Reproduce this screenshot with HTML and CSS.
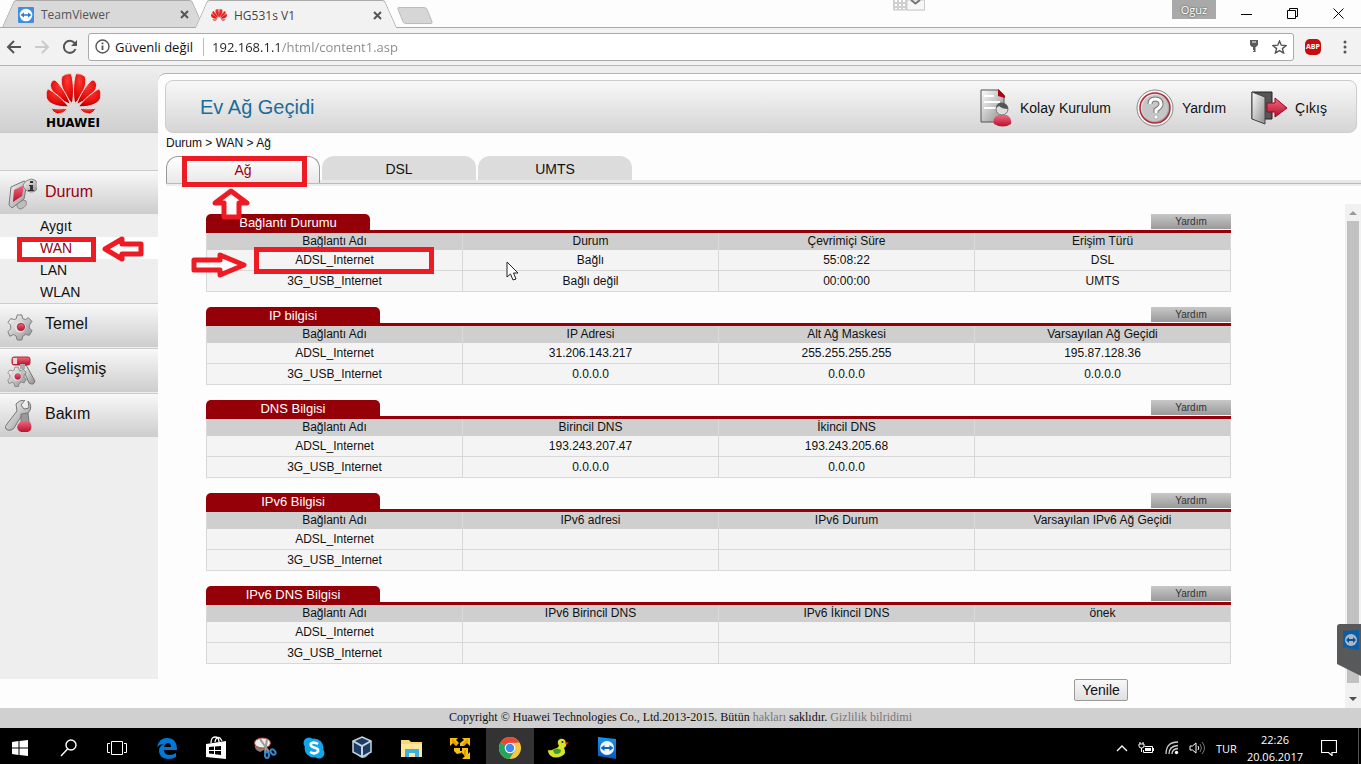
FILE: index.html
```
<!DOCTYPE html>
<html lang="tr">
<head>
    <meta charset="UTF-8">
    <meta name="viewport" content="width=device-width, initial-scale=1.0">
    <title>HG531s V1</title>
    <link rel="stylesheet" href="styles.css">
</head>
<body>
    <svg class="defs" aria-hidden="true">
        <defs>
            <radialGradient id="petal" cx="50%" cy="25%" r="80%"><stop offset="0" stop-color="#fb3a30"/><stop offset="0.6" stop-color="#e60d0d"/><stop offset="1" stop-color="#b00000"/></radialGradient>
            <linearGradient id="metal" x1="0" y1="0" x2="1" y2="1"><stop offset="0" stop-color="#fdfdfd"/><stop offset="1" stop-color="#8d8d8d"/></linearGradient>
            <linearGradient id="red" x1="0" y1="0" x2="0" y2="1"><stop offset="0" stop-color="#ee6b80"/><stop offset="1" stop-color="#b90d2b"/></linearGradient>
            <linearGradient id="blue" x1="0" y1="0" x2="0" y2="1"><stop offset="0" stop-color="#1b93ee"/><stop offset="1" stop-color="#0a56b8"/></linearGradient>
            <g id="petals">
                <path d="M79 91C60 74 38 34 48 9Q58-1 76 1C84 30 84 65 79 91Z"/>
                <path d="M73 93C54 86 14 62 13 36Q15 20 27 20C42 32 65 66 73 93Z"/>
                <path d="M68 100C50 102 10 98 1 74Q-2 55 5 46C24 55 52 79 68 100Z"/>
                <path d="M65 106C50 105 30 108 14 104Q22 120 34 122Q52 123 65 106Z"/>
            </g>
        </defs>
        <symbol id="huawei" viewBox="0 0 165 124">
            <g fill="url(#petal)" stroke="#e4e4e4" stroke-width="3"><use href="#petals"/><use href="#petals" transform="matrix(-1 0 0 1 165 0)"/></g>
        </symbol>
        <symbol id="teamviewer" viewBox="0 0 16 16">
            <rect width="16" height="16" rx="1" fill="#3d8ee0"/><circle cx="8" cy="8" r="6.3" fill="#fff"/>
            <path d="M2.6 8L6 5.4V7.2H10V5.4L13.4 8L10 10.6V8.8H6V10.6Z" fill="#2a7bd0"/>
        </symbol>
        <symbol id="gear" viewBox="0 0 28 28">
            <path d="M11 1H16L17 5L20 6L23 4L27 8L24 12V15L27 18L24 23L20 22L17 24L16 28H11L10 24L7 22L3 24L1 19L4 16V12L1 9L4 5L8 6L10 5Z" fill="url(#metal)" stroke="#777" stroke-width="1"/>
            <circle cx="14" cy="14" r="6" fill="#e2e2e2"/><circle cx="15" cy="14" r="4" fill="url(#red)" stroke="#a8324a"/>
        </symbol>
    </svg>

    <div class="tab-strip">
        <div class="tab">
            <svg class="favicon"><use href="#teamviewer"/></svg>
            <span class="tab-title">TeamViewer</span>
            <button class="tab-close" aria-label="Kapat"><svg viewBox="0 0 9 9"><path d="M1 1L8 8M8 1L1 8"/></svg></button>
        </div>
        <div class="tab active">
            <svg class="favicon"><use href="#huawei"/></svg>
            <span class="tab-title">HG531s V1</span>
            <button class="tab-close" aria-label="Kapat"><svg viewBox="0 0 9 9"><path d="M1 1L8 8M8 1L1 8"/></svg></button>
        </div>
        <button class="new-tab" aria-label="Yeni sekme"></button>
        <div class="remote-handle">
            <svg width="32" height="11" viewBox="0 0 32 11"><path d="M0 0H32V10.500H0Z" fill="#d0d0d0"/><path d="M14 0H31.500V10H14Z" fill="#f7f7f7" stroke="#ccc"/><path d="M2 0H4V2H2ZM6 0H8V2H6ZM10 0H12V2H10ZM2 4H4V6H2ZM6 4H8V6H6ZM10 4H12V6H10ZM2 8H4V9H2ZM6 8H8V9H6ZM10 8H12V9H10Z" fill="#fff"/><path d="M18 0L22.500 3.500L27 0" fill="none" stroke="#777" stroke-width="2"/></svg>
        </div>
        <div class="window-buttons">
            <button class="user">Oguz</button>
            <button aria-label="Simge durumuna küçült"><svg viewBox="0 0 11 11"><path d="M0 6.500H11"/></svg></button>
            <button aria-label="Önceki boyut"><svg viewBox="0 0 11 11"><path d="M0.500 2.500H8.500V10.500H0.500ZM2.500 2.500V0.500H10.500V8.500H8.500"/></svg></button>
            <button aria-label="Kapat"><svg viewBox="0 0 11 11"><path d="M0.500 0.500L10.500 10.500M10.500 0.500L0.500 10.500"/></svg></button>
        </div>
    </div>

    <div class="toolbar">
        <div class="nav-buttons">
            <button aria-label="Geri"><svg viewBox="0 0 16 16"><path d="M15 8H2M8 2L2 8L8 14"/></svg></button>
            <button aria-label="İleri" class="off"><svg viewBox="0 0 16 16"><path d="M1 8H14M8 2L14 8L8 14"/></svg></button>
            <button aria-label="Yenile"><svg viewBox="0 0 16 16"><path d="M13.500 10A6 6 0 1 1 12.500 4"/><path d="M15 1V7H9Z" fill="#555" stroke="none"/></svg></button>
        </div>
        <div class="address">
            <svg width="15" height="15" viewBox="0 0 15 15" fill="none" stroke="#555" stroke-width="1.400"><circle cx="7.500" cy="7.500" r="6.500"/><path d="M7.500 6.500V11M7.500 3.500V5.200" stroke-width="1.800"/></svg>
            <label for="url">Güvenli değil</label>
            <input id="url" type="text" value="192.168.1.1/html/content1.asp">
            <svg width="10" height="13" viewBox="0 0 10 13"><path d="M1 0H9V5L7 7H6.500V12H4V11H5V10H4V7H3L1 5Z" fill="#5a5a5a"/><path d="M3 2H7" stroke="#fff"/></svg>
            <svg width="15" height="14" viewBox="0 0 15 14"><path d="M7.500 1L9.300 5.200L14 5.600L10.400 8.600L11.600 13L7.500 10.600L3.400 13L4.600 8.600L1 5.600L5.700 5.200Z" fill="none" stroke="#555" stroke-width="1.400"/></svg>
        </div>
        <button class="abp">ABP</button>
        <button class="more" aria-label="Menü"><svg viewBox="0 0 4 14"><circle cx="2" cy="2" r="1.500"/><circle cx="2" cy="7" r="1.500"/><circle cx="2" cy="12" r="1.500"/></svg></button>
    </div>

    <div class="page">
        <aside class="sidebar">
            <div class="logo">
                <svg><use href="#huawei"/></svg>
                <span>HUAWEI</span>
            </div>
            <nav>
                <a class="menu current" href="#">
                    <svg viewBox="0 0 32 32"><path d="M12 25Q15 20 21 23Q23 28 16 31Q11 31 12 25Z" fill="#bdbdbd" stroke="#888"/><path d="M6 9L19 3L22 5L19 21L7 30L4 27Z" fill="url(#metal)" stroke="#777"/><path d="M9 12L19 7L17 18L8 24Z" fill="url(#red)"/><path d="M18 7Q20 2 26 1Q33 2 33 8Q32 14 26 14Q19 13 18 7Z" fill="url(#metal)" stroke="#888"/><path d="M25 3H28V5H25ZM24 7H28V12H29V13H23V12H25V8H24Z" fill="#333"/></svg>
                    Durum
                </a>
                <ul class="submenu">
                    <li><a href="#">Aygıt</a></li>
                    <li class="selected"><a href="#">WAN</a>
                        <span class="mark mark-wan"></span>
                        <svg class="arrow arrow-wan" viewBox="0 0 42 28"><path d="M3 14L20 4V9H39V19H20V24Z"/></svg>
                    </li>
                    <li><a href="#">LAN</a></li>
                    <li><a href="#">WLAN</a></li>
                </ul>
                <a class="menu" href="#">
                    <svg viewBox="0 0 32 32"><use href="#gear" x="2" y="3" width="26" height="28"/></svg>
                    Temel
                </a>
                <a class="menu" href="#">
                    <svg viewBox="0 0 32 32"><path d="M21 10L30 26Q29 31 24 28L17 12Z" fill="url(#metal)" stroke="#777"/><rect x="7" y="2" width="18" height="8" rx="2" fill="url(#red)" stroke="#a33"/><rect x="8" y="3" width="4" height="6" fill="#f2d5da"/><path d="M15 9H20V14H15Z" fill="#aaa"/><use href="#gear" x="2" y="11" width="20" height="21"/></svg>
                    Gelişmiş
                </a>
                <a class="menu" href="#">
                    <svg viewBox="0 0 32 32"><path d="M11 4Q14 0 20 0L16 5L19 9L24 8L23 1Q28 6 24 12Q21 15 17 15L9 28Q5 32 1 29Q-1 27 2 24L12 11Z" fill="url(#metal)" stroke="#777"/><path d="M16 14L23 13L24 22H16Z" fill="#999" stroke="#777"/><path d="M15 22Q20 19 25 22Q28 27 25 31Q19 34 14 31Q10 27 15 22Z" fill="url(#red)"/></svg>
                    Bakım
                </a>
            </nav>
        </aside>

        <main>
            <header class="banner">
                <h1>Ev Ağ Geçidi</h1>
                <a href="#">
                    <svg width="32" height="38" viewBox="0 0 32 38"><path d="M1 1H19L24 6V33H1Z" fill="url(#metal)" stroke="#555"/><path d="M18 0L25 7V9L18 7Z" fill="#b00012"/><path d="M4 7H14M4 13H20M4 19H17" stroke="#fff" stroke-width="2"/><path d="M14 35Q12 29 18 26H27Q32 29 31 35Q23 40 14 35Z" fill="url(#red)"/><circle cx="22" cy="20" r="6" fill="#ddd" stroke="#777"/><path d="M16 19Q17 13 23 14Q28 15 28 20Q22 20 19 17Z" fill="#555"/></svg>
                    Kolay Kurulum
                </a>
                <a href="#">
                    <svg width="38" height="38" viewBox="0 0 38 38"><circle cx="19" cy="19" r="18" fill="#f7f7f7" stroke="#888"/><circle cx="19" cy="19" r="15" fill="url(#metal)" stroke="#b02a3b" stroke-width="1.500"/><circle cx="19" cy="19" r="13" fill="#c6c6c6"/><path d="M14 15Q14 10 19 10Q25 10 25 15Q25 18 20 21V24" fill="none" stroke="#777" stroke-width="5"/><path d="M14 15Q14 10 19 10Q25 10 25 15Q25 18 20 21V24" fill="none" stroke="#fff" stroke-width="3"/><circle cx="20" cy="28" r="2" fill="#fff" stroke="#888" stroke-width=".5"/></svg>
                    Yardım
                </a>
                <a href="#">
                    <svg width="36" height="34" viewBox="0 0 36 34"><path d="M1 1H21V28H1Z" fill="#555" stroke="#222"/><path d="M1 1L14 6V33L1 28Z" fill="url(#metal)" stroke="#444"/><path d="M16 12H24V7L36 17L24 26V21H16Z" fill="url(#red)" stroke="#a0001c"/></svg>
                    Çıkış
                </a>
            </header>
            <div class="breadcrumb">Durum &gt; WAN &gt; Ağ</div>
            <ul class="tabs">
                <li class="open"><a href="#">Ağ</a>
                    <span class="mark mark-tab"></span>
                    <svg class="arrow arrow-tab" viewBox="0 0 38 32"><path d="M19 3L35 15H27V29H12V15H3Z"/></svg>
                </li>
                <li><a href="#">DSL</a></li>
                <li><a href="#">UMTS</a></li>
            </ul>

            <div class="scroll-area">
                <div class="content">
                    <section>
                        <div class="section-head"><h2 class="short">Bağlantı Durumu</h2><button>Yardım</button></div>
                        <table>
                            <thead><tr><th>Bağlantı Adı</th><th>Durum</th><th>Çevrimiçi Süre</th><th>Erişim Türü</th></tr></thead>
                            <tbody>
                                <tr>
                                    <td class="marked">ADSL_Internet
                                        <span class="mark mark-row"></span>
                                        <svg class="arrow arrow-row" viewBox="0 0 56 28"><path d="M3 9H29V4L53 14L29 24V19H3Z"/></svg>
                                    </td>
                                    <td class="marked">Bağlı
                                        <svg class="cursor" viewBox="0 0 14 20"><path d="M1 1V16L4.500 13L7 19L10 18L7.500 12H12Z" fill="#fff" stroke="#222"/></svg>
                                    </td>
                                    <td>55:08:22</td><td>DSL</td>
                                </tr>
                                <tr><td>3G_USB_Internet</td><td>Bağlı değil</td><td>00:00:00</td><td>UMTS</td></tr>
                            </tbody>
                        </table>
                    </section>
                    <section>
                        <div class="section-head"><h2>IP bilgisi</h2><button>Yardım</button></div>
                        <table>
                            <thead><tr><th>Bağlantı Adı</th><th>IP Adresi</th><th>Alt Ağ Maskesi</th><th>Varsayılan Ağ Geçidi</th></tr></thead>
                            <tbody>
                                <tr><td>ADSL_Internet</td><td>31.206.143.217</td><td>255.255.255.255</td><td>195.87.128.36</td></tr>
                                <tr><td>3G_USB_Internet</td><td>0.0.0.0</td><td>0.0.0.0</td><td>0.0.0.0</td></tr>
                            </tbody>
                        </table>
                    </section>
                    <section>
                        <div class="section-head"><h2>DNS Bilgisi</h2><button>Yardım</button></div>
                        <table>
                            <thead><tr><th>Bağlantı Adı</th><th>Birincil DNS</th><th>İkincil DNS</th><th></th></tr></thead>
                            <tbody>
                                <tr><td>ADSL_Internet</td><td>193.243.207.47</td><td>193.243.205.68</td><td></td></tr>
                                <tr><td>3G_USB_Internet</td><td>0.0.0.0</td><td>0.0.0.0</td><td></td></tr>
                            </tbody>
                        </table>
                    </section>
                    <section>
                        <div class="section-head"><h2>IPv6 Bilgisi</h2><button>Yardım</button></div>
                        <table>
                            <thead><tr><th>Bağlantı Adı</th><th>IPv6 adresi</th><th>IPv6 Durum</th><th>Varsayılan IPv6 Ağ Geçidi</th></tr></thead>
                            <tbody>
                                <tr><td>ADSL_Internet</td><td></td><td></td><td></td></tr>
                                <tr><td>3G_USB_Internet</td><td></td><td></td><td></td></tr>
                            </tbody>
                        </table>
                    </section>
                    <section>
                        <div class="section-head"><h2>IPv6 DNS Bilgisi</h2><button>Yardım</button></div>
                        <table>
                            <thead><tr><th>Bağlantı Adı</th><th>IPv6 Birincil DNS</th><th>IPv6 İkincil DNS</th><th>önek</th></tr></thead>
                            <tbody>
                                <tr><td>ADSL_Internet</td><td></td><td></td><td></td></tr>
                                <tr><td>3G_USB_Internet</td><td></td><td></td><td></td></tr>
                            </tbody>
                        </table>
                    </section>
                    <div class="actions"><button class="refresh">Yenile</button></div>
                </div>
                <div class="scrollbar">
                    <svg viewBox="0 0 8 4"><path d="M0 4L4 0L8 4Z" fill="#999"/></svg>
                    <div class="thumb"></div>
                    <svg viewBox="0 0 8 4"><path d="M0 0L4 4L8 0Z" fill="#505050"/></svg>
                    <svg class="tv-tab" viewBox="0 0 24 52"><path d="M3 0H24V52L0 40V3Q0 0 3 0Z" fill="#58595b"/><path d="M6 7L22 6V26L6 23Z" fill="#0b5ea6"/><circle cx="14" cy="16" r="6" fill="#a9b8c4"/><path d="M9 16L12 13V15H16V13L19 16L16 19V17H12V19Z" fill="#0b4f91"/></svg>
                </div>
            </div>
        </main>
    </div>

    <footer>Copyright © Huawei Technologies Co., Ltd.2013-2015. Bütün <a href="#">hakları</a> saklıdır. <a href="#">Gizlilik bilridimi</a></footer>

    <div class="taskbar">
        <div class="apps">
            <button aria-label="Başlat"><svg viewBox="0 0 24 24"><path d="M4 6L10.500 5V11.500H4ZM11.500 4.900L20 4V11.500H11.500ZM4 12.500H10.500V19L4 18ZM11.500 12.500H20V20L11.500 19.100Z" fill="#fff"/></svg></button>
            <button aria-label="Ara"><svg viewBox="0 0 24 24"><g fill="none" stroke="#fff" stroke-width="1.400"><circle cx="14" cy="9" r="5"/><path d="M10.500 13L4 20"/></g></svg></button>
            <button aria-label="Görev Görünümü"><svg viewBox="0 0 24 24"><path d="M5.500 5.500H16.500V18.500H5.500ZM4 7.500H1.500V16.500H4M18 7.500H20.500V16.500H18" fill="none" stroke="#fff"/></svg></button>
            <button aria-label="Edge"><svg viewBox="0 0 24 24"><path d="M2 11Q4 2 12 2Q22 2 22 14H9Q9 19 15 19Q18 19 21 17V21Q18 23 13 23Q4 22 4 15Q4 10 9 8Q5 8 2 11ZM9 11H16Q16 7 13 7Q10 7 9 11Z" fill="#0078d7" fill-rule="evenodd"/></svg></button>
            <button aria-label="Mağaza"><svg viewBox="0 0 24 24"><path d="M2 8L22 5V23L2 21Z" fill="#fff"/><path d="M7 7Q7 1 11 1Q15 1 15 6M11 6Q12 0 16 2L18 5" fill="none" stroke="#fff" stroke-width="1.300"/><path d="M5 11L10 10.500V14H5ZM11 10.400L17 10V14H11ZM5 15H10V18L5 17.500ZM11 15H17V19L11 18.200Z" fill="#000"/></svg></button>
            <button aria-label="Ekran Alıntısı"><svg viewBox="0 0 24 24"><path d="M2 9Q1 14 7 16L13 13L10 9Z" fill="#897b76"/><ellipse cx="9.500" cy="7" rx="8" ry="5" fill="#eee" stroke="#b6403b"/><path d="M7 3L16 16M14 3L12 17" stroke="#9a9a9a" stroke-width="2"/><g fill="none" stroke="#2f8fd6" stroke-width="2"><ellipse cx="14" cy="19" rx="2" ry="3"/><ellipse cx="20" cy="16" rx="2" ry="3" transform="rotate(-40 20 16)"/></g></svg></button>
            <button aria-label="Skype"><svg viewBox="0 0 24 24"><circle cx="12" cy="12" r="9.500" fill="#12a5e8"/><circle cx="7" cy="7" r="5.500" fill="#12a5e8"/><circle cx="17" cy="17" r="5.500" fill="#12a5e8"/><path d="M16 8Q12 5.500 9 7.500Q7.500 10 12 11.500Q17 12.500 16 15.500Q13 19 8 16" fill="none" stroke="#fff" stroke-width="2.600"/></svg></button>
            <button aria-label="VirtualBox"><svg viewBox="0 0 24 24"><path d="M6 18Q12 26 18 18Z" fill="#8fa4ba"/><path d="M11 1L20 5V16L11 21L2 16V5Z" fill="#1c3b60" stroke="#c5d3e0" stroke-width="1.500"/><path d="M2 5L11 10L20 5M11 10V21" fill="none" stroke="#c5d3e0" stroke-width="2"/></svg></button>
            <button aria-label="Dosya Gezgini"><svg viewBox="0 0 24 24"><path d="M1 4H9L11 6H22V21H1Z" fill="#f8d775"/><path d="M1 8H22V21H1Z" fill="#ffe69b"/><path d="M5 13H19V21H15V17H9V21H5Z" fill="#3eb0e0"/></svg></button>
            <button aria-label="VMware"><svg viewBox="0 0 24 24"><path d="M1 2H9L7 4L10 7L7 10L4 7L1 10ZM13 2H21V10L18 7L15 10H11V7L15 4ZM5 12H11V15H14L12 17L8 18L5 15ZM13 12H19V18L21 16V23H13L16 20L13 17Z" fill="#f8c20c"/><path d="M3 4L8 9M19 4L14 9M16 14V20" stroke="#e39a00" stroke-width="2"/></svg></button>
            <button class="running" aria-label="Chrome"><svg viewBox="0 0 24 24"><circle cx="12" cy="12" r="11" fill="#f7c83f"/><path d="M12 12L2.500 6.500A11 11 0 0 1 21.500 6.500L12 7Z" fill="#e8473b"/><path d="M12 12L2.500 6.500A11 11 0 0 0 11.500 23L17 14Z" fill="#27a45b"/><circle cx="12" cy="12" r="5.300" fill="#fff"/><circle cx="12" cy="12" r="4.200" fill="#4285f4"/></svg></button>
            <button aria-label="Duck"><svg viewBox="0 0 24 24"><path d="M1 14Q4 15 7 13Q11 12 12 10Q9 5 13 3Q18 2 19 7Q20 10 17 12Q20 17 15 20Q8 23 4 20Q1 18 1 14Z" fill="#d9e32c"/><path d="M6 14Q10 11 14 14Q14 18 9 18Q7 18 6 14Z" fill="#3b9e2c"/><path d="M18 6L22 6.500L19 9Z" fill="#e22"/><circle cx="15.500" cy="6" r="1" fill="#222"/></svg></button>
            <button aria-label="TeamViewer"><svg viewBox="0 0 24 24"><path d="M2 1L20 3V23L2 20Z" fill="url(#blue)"/><circle cx="11" cy="12" r="7" fill="#eef5fb"/><path d="M4.500 12L8.500 9V11H13.500V9L17.500 12L13.500 15V13H8.500V15Z" fill="#1263bd"/></svg></button>
        </div>
        <div class="tray">
            <svg width="12" height="8" viewBox="0 0 12 8"><path d="M1 7L6 2L11 7" fill="none" stroke="#fff" stroke-width="1.300"/></svg>
            <svg width="17" height="13" viewBox="0 0 17 13"><path d="M1 2H6V4Q6 6 3.500 6Q1 6 1 4ZM2 0V2M5 0V2M3.500 6V10" fill="none" stroke="#fff"/><path d="M6.500 4.500H14.500V10.500H5.500V8" fill="none" stroke="#fff"/><path d="M7 6H13V9H7ZM15 6H16V9H15Z" fill="#fff"/></svg>
            <svg width="14" height="14" viewBox="0 0 14 14"><g fill="none" stroke="#ccc" stroke-width="1.300"><path d="M1 13Q1 1 13 1M4 13Q4 5 13 4.500M7 13Q7 8 13 7.500"/></g><circle cx="11.500" cy="11.500" r="1.700" fill="#fff"/></svg>
            <svg width="17" height="14" viewBox="0 0 17 14"><path d="M1 5H3.500L7 2V12L3.500 9H1Z" fill="none" stroke="#fff"/><path d="M9 5Q10.500 7 9 9" fill="none" stroke="#fff"/><path d="M11 3Q14 7 11 11M13 1Q18 7 13 13" fill="none" stroke="#777"/></svg>
            <span>TUR</span>
            <div class="clock">22:26<br>20.06.2017</div>
            <svg class="notice" width="16" height="16" viewBox="0 0 16 16"><path d="M.5.5H15.500V12.500H11V15.500L7.500 12.500H.5Z" fill="none" stroke="#fff" stroke-width="1.200"/></svg>
        </div>
    </div>
</body>
</html>
```
FILE: styles.css
```
* { box-sizing: border-box; }
body { margin: 0; min-height: 100vh; display: flex; flex-direction: column; background-color: #fdfdfd; font-family: "Liberation Sans", Arial, sans-serif; font-size: 12px; color: #111; }
button { margin: 0; padding: 0; border: none; background: none; font: inherit; color: inherit; }
a { color: inherit; text-decoration: none; }
ul { list-style: none; margin: 0; padding: 0; }
svg { display: block; flex: none; }
.defs { position: absolute; width: 0; height: 0; }

/* browser window */
.tab-strip { position: relative; display: flex; height: 28px; padding-left: 8px; font-family: "Open Sans", sans-serif; border-bottom: 1px solid #aaa; }
.tab { position: relative; z-index: 1; display: flex; align-items: center; gap: 7px; width: 190px; height: 27px; padding: 2px 9px 0 10px; color: #555; }
.tab::before, .tab::after { content: ""; position: absolute; z-index: -1; top: 0; bottom: 0; width: 60%; background-color: #d9d9d9; border-top: 1px solid #aaa; }
.tab::before { left: 0; transform: skewX(-24deg); border-left: 1px solid #aaa; border-top-left-radius: 3px; }
.tab::after { right: 0; transform: skewX(24deg); border-right: 1px solid #aaa; border-top-right-radius: 3px; }
.tab.active { z-index: 2; width: 190px; height: 28px; margin-left: 3px; color: #444; }
.tab.active::before, .tab.active::after { background-color: #f2f2f2; }
.favicon { width: 16px; height: 16px; }
.tab-title { flex: 1; font-size: 12px; }
.tab-close { width: 9px; height: 9px; }
.tab-close svg { width: 9px; height: 9px; stroke: #555; stroke-width: 2; }
.new-tab { width: 30px; height: 17px; margin: 7px 0 0 9px; background-color: #d6d6d6; border: 1px solid #bbb; border-radius: 3px; transform: skewX(22deg); }
.remote-handle { margin-left: auto; margin-right: 436px; }
.window-buttons { position: absolute; top: 0; right: 0; display: flex; }
.window-buttons button { display: flex; align-items: center; justify-content: center; width: 46px; height: 26px; }
.window-buttons svg { width: 11px; height: 11px; fill: none; stroke: #000; }
.window-buttons .user { width: 44px; height: 19px; margin-right: 7px; background-color: #a9a9a9; color: #fff; font-size: 11px; text-shadow: 0 0 2px #333; }
.toolbar { display: flex; align-items: center; height: 38px; padding: 0 14px 0 6px; background-color: #f2f2f2; border-bottom: 1px solid #b5b5b5; font-family: "Open Sans", sans-serif; }
.nav-buttons { display: flex; gap: 12px; width: 82px; }
.nav-buttons svg { width: 16px; height: 16px; fill: none; stroke: #555; stroke-width: 2; }
.nav-buttons .off { opacity: 0.25; }
.address { flex: 1; display: flex; align-items: center; height: 28px; padding: 0 6px; background-color: #fff; border: 1px solid #aaa; border-radius: 3px; font-size: 13px; }
.address label { margin-left: 5px; padding-right: 10px; border-right: 1px solid #bbb; }
.address input { flex: 1; border: none; outline: none; padding: 0 0 0 8px; font: inherit; background: linear-gradient(to right, #222 78px, #888 78px); background-clip: text; -webkit-background-clip: text; -webkit-text-fill-color: transparent; }
.address input + svg { margin-right: 13px; }
.abp { width: 16px; height: 16px; margin-left: 11px; background-color: #c70d0d; border-radius: 5px; color: #fff; font-size: 7px; font-weight: bold; }
.more { margin-left: 22px; }
.more svg { width: 4px; height: 14px; fill: #555; }

/* sidebar */
.page { flex: 1; display: flex; background: linear-gradient(#eee, #eee) top / 100% 20px no-repeat; }
.sidebar { width: 158px; flex: none; margin-bottom: 29px; background-color: #eee; }
.logo { display: flex; flex-direction: column; align-items: center; gap: 1px; height: 67px; padding: 7px 12px 0 0; background: linear-gradient(#efefef, #d0d0d0); border-bottom: 1px solid #c8c8c8; font: bold 12px/14px "DejaVu Sans", sans-serif; color: #000; }
.logo svg { width: 55px; height: 42px; }
.sidebar nav { margin-top: 37px; }
.menu { display: flex; align-items: center; gap: 8px; height: 44px; margin-bottom: 1px; padding: 0 5px 4px; border-top: 1px solid #ccc; background: linear-gradient(#f8f8f8, #cdcdcd); font-size: 16px; }
.menu svg { width: 32px; height: 32px; margin-top: 4px; }
.menu.current { margin-bottom: 0; padding-bottom: 2px; }
.current, .selected { color: #990011; }
.submenu { padding-top: 1px; font-size: 14px; line-height: 22px; }
.submenu li { position: relative; padding-left: 40px; }
.submenu .selected { background-color: #fff; }

/* header and tabs */
main { flex: 1; min-width: 0; display: flex; flex-direction: column; margin-top: 7px; background-color: #fdfdfd; border-top: 1px solid #b5b5b5; border-top-left-radius: 8px; }
.banner { display: flex; align-items: center; gap: 25px; height: 53px; margin: 6px 4px 0 7px; padding: 2px 29px 0 34px; border: 1px solid #ccc; border-radius: 8px; background: linear-gradient(#f8f8f8, #d5d5d5); }
.banner h1 { flex: 1; margin: 0; font-size: 20px; font-weight: normal; color: #1c6c9b; }
.banner a { display: flex; align-items: center; gap: 8px; font-size: 14px; }
.breadcrumb { padding: 3px 0 0 8px; line-height: 14px; }
.tabs { display: flex; gap: 2px; height: 36px; margin-left: 8px; padding-top: 6px; font-size: 14px; line-height: 26px; text-align: center; background: linear-gradient(#e8e8e8 3px, #bbb 3px, #bbb 4px, #eee 4px) bottom / 100% 6px no-repeat; }
.tabs li { position: relative; width: 154px; height: 24px; background-color: #dcdcdc; border-radius: 12px 12px 0 0; }
.tabs .open { height: 27px; background: linear-gradient(#fff, #e8e8e8); border: 1px solid #999; border-bottom: none; color: #990011; }

/* status tables */
.scroll-area { flex: 1; display: flex; margin-top: 18px; }
.content { flex: 1; padding: 10px 114px 7px 48px; }
section { margin-bottom: 15px; }
.section-head { display: flex; justify-content: space-between; height: 19px; border-bottom: 3px solid #950008; }
.section-head h2 { width: 174px; margin: 0; border-radius: 5px 5px 0 0; background-color: #950008; color: #fff; font-size: 13px; line-height: 18px; font-weight: normal; text-align: center; }
.section-head .short { width: 164px; }
.section-head button { width: 80px; height: 15px; background: linear-gradient(#c8c8c8, #999); color: #333; font-size: 10px; }
table { width: 100%; table-layout: fixed; border-collapse: separate; border-spacing: 0; border-left: 1px solid #d8d8d8; text-align: center; }
th { height: 17px; padding: 0; background-color: #cfcfcf; border-right: 1px solid #dadada; font-weight: normal; line-height: 17px; }
td { height: 21px; padding: 0; background-color: #f4f4f4; border: 1px solid #d8d8d8; border-width: 0 1px 1px 0; line-height: 20px; }
.marked { position: relative; }
.actions { display: flex; justify-content: flex-end; padding-right: 103px; }
.refresh { width: 54px; height: 22px; border: 1px solid #999; border-radius: 2px; background: linear-gradient(#f8f8f8, #e0e0e0); font-size: 14px; }
.scrollbar { position: relative; display: flex; flex-direction: column; align-items: center; gap: 6px; width: 16px; padding: 7px 0; background-color: #f1f1f1; }
.scrollbar svg { width: 8px; height: 4px; }
.thumb { flex: 1; width: 12px; margin-bottom: 8px; background-color: #c1c1c1; }
.scrollbar .tv-tab { position: absolute; right: 0; bottom: 32px; width: 24px; height: 52px; }

/* red marks */
.mark { position: absolute; z-index: 3; border: 5px solid #ed1c24; }
.mark-wan { left: 17px; top: 0; width: 79px; height: 25px; }
.mark-tab { left: 15px; top: -1px; width: 125px; height: 31px; }
.mark-row { left: 47px; top: -3px; width: 180px; height: 27px; }
.arrow { position: absolute; z-index: 3; fill: #fdfdfd; stroke: #ed1c24; stroke-width: 5; stroke-linejoin: round; }
.arrow-wan { left: 102px; top: -2px; width: 42px; height: 28px; }
.arrow-tab { left: 45px; top: 31px; width: 38px; height: 32px; }
.arrow-row { left: -16px; top: 1px; width: 56px; height: 28px; }
.cursor { position: absolute; z-index: 3; left: 43px; top: 11px; width: 14px; height: 20px; }

footer { height: 20px; background-color: #d0d0d0; font: 12px/18px "Liberation Serif", serif; text-align: center; }
footer a { color: #777; }

/* taskbar */
.taskbar { display: flex; justify-content: space-between; height: 36px; background-color: #000; color: #fff; font-family: "Open Sans", sans-serif; }
.apps { display: flex; gap: 9px; }
.apps button { display: flex; align-items: center; justify-content: center; width: 40px; height: 36px; padding-top: 4px; }
.apps svg { width: 24px; height: 24px; }
.apps .running { width: 48px; margin: 0 -4px; background-color: #333; }
.tray { display: flex; align-items: center; gap: 10px; margin-right: 2px; padding: 4px 21px 0 0; border-right: 1px solid #555; font-size: 11px; }
.clock { line-height: 17px; text-align: center; }
.notice { margin-left: 8px; }
```
